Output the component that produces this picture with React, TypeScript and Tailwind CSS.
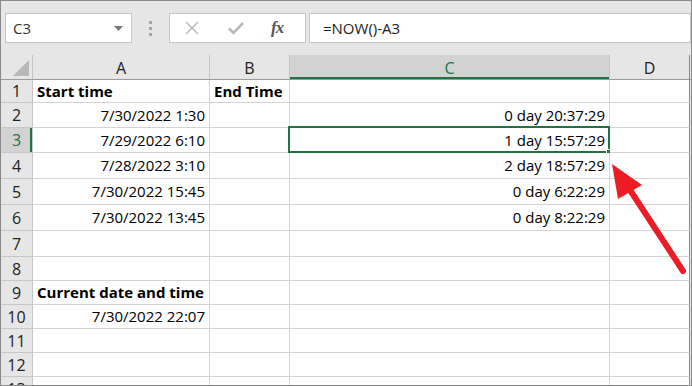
import type { ReactNode } from 'react';

const cols = [
    { key: 'A', w: 'w-[177px]' },
    { key: 'B', w: 'w-[80px]' },
    { key: 'C', w: 'w-[320px]' },
    { key: 'D', w: 'w-[80px]' },
];

type Cell = { text?: string; bold?: boolean; right?: boolean };

const rows: { n: number; h: string; cells: Cell[] }[] = [
    { n: 1, h: 'h-[23px]', cells: [{ text: 'Start time', bold: true }, { text: 'End Time', bold: true }, {}, {}] },
    { n: 2, h: 'h-[25px]', cells: [{ text: '7/30/2022 1:30', right: true }, {}, { text: '0 day 20:37:29', right: true }, {}] },
    { n: 3, h: 'h-[25px]', cells: [{ text: '7/29/2022 6:10', right: true }, {}, { text: '1 day 15:57:29', right: true }, {}] },
    { n: 4, h: 'h-[26px]', cells: [{ text: '7/28/2022 3:10', right: true }, {}, { text: '2 day 18:57:29', right: true }, {}] },
    { n: 5, h: 'h-[26px]', cells: [{ text: '7/30/2022 15:45', right: true }, {}, { text: '0 day 6:22:29', right: true }, {}] },
    { n: 6, h: 'h-[26px]', cells: [{ text: '7/30/2022 13:45', right: true }, {}, { text: '0 day 8:22:29', right: true }, {}] },
    { n: 7, h: 'h-[26px]', cells: [{}, {}, {}, {}] },
    { n: 8, h: 'h-[24px]', cells: [{}, {}, {}, {}] },
    { n: 9, h: 'h-[24px]', cells: [{ text: 'Current date and time', bold: true }, {}, {}, {}] },
    { n: 10, h: 'h-[24px]', cells: [{ text: '7/30/2022 22:07', right: true }, {}, {}, {}] },
    { n: 11, h: 'h-[24px]', cells: [{}, {}, {}, {}] },
    { n: 12, h: 'h-[24px]', cells: [{}, {}, {}, {}] },
    { n: 13, h: 'h-[24px]', cells: [{}, {}, {}, {}] },
];

function Box({ className, children }: { className: string; children?: ReactNode }) {
    return <div className={`bg-white border border-[#c6c6c6] h-[30px] flex items-center ${className}`}>{children}</div>;
}

function App() {
    return (
        <div className="relative w-[692px] h-[386px] overflow-hidden bg-[#e6e6e6] border border-[#8a8a8a] font-['Open_Sans',sans-serif]">
            {/* formula bar */}
            <div className="h-[54px] flex items-start pt-[12px] pl-[4px]">
                <Box className="w-[127px] pl-[7px] pr-[8px] justify-between">
                    <span className="text-[15px] text-[#333]">C3</span>
                    <svg width="9" height="5" viewBox="0 0 9 5"><path d="M0 0h9L4.5 5z" fill="#777" /></svg>
                </Box>
                <div className="w-[37px] h-[30px] flex flex-col items-center justify-center gap-[3px]">
                    <span className="w-[3px] h-[3px] bg-[#a6a6a6]" />
                    <span className="w-[3px] h-[3px] bg-[#a6a6a6]" />
                    <span className="w-[3px] h-[3px] bg-[#a6a6a6]" />
                </div>
                <Box className="w-[137px] pl-[15px]">
                    <svg width="14" height="14" viewBox="0 0 14 14"><path d="M1 1L13 13M13 1L1 13" stroke="#b5b5b5" strokeWidth="1.4" /></svg>
                    <svg width="16" height="14" viewBox="0 0 16 14" className="ml-[29px]"><path d="M1 7.5L5.5 12L15 2" stroke="#b9b9b9" strokeWidth="2.6" fill="none" /></svg>
                    <span className="ml-[27px] font-['Liberation_Serif',serif] italic font-bold text-[17px] text-[#555] tracking-[-1px]">fx</span>
                </Box>
                <Box className="flex-1 ml-[3px] pl-[13px]">
                    <span className="text-[15px] text-[#222]">=NOW()-A3</span>
                </Box>
            </div>

            {/* column headers */}
            <div className="flex h-[25px] border-b border-[#9b9b9b]">
                <div className="w-[32px] border-r border-[#c6c6c6] flex items-end justify-end pr-[3px] pb-[3px]">
                    <svg width="16" height="16" viewBox="0 0 16 16"><path d="M16 0V16H0z" fill="#b8b8b8" /></svg>
                </div>
                {cols.map((c) => (
                    <div
                        key={c.key}
                        className={`${c.w} flex items-center justify-center text-[16px] pt-[2px] border-r ${
                            c.key === 'C'
                                ? 'bg-[#d2d2d2] border-[#c6c6c6] text-[#217346] shadow-[inset_0_-2px_0_#217346]'
                                : c.key === 'D'
                                  ? 'border-[#8a8a8a] text-[#222]'
                                  : 'border-[#c6c6c6] text-[#222]'
                        }`}
                    >
                        {c.key}
                    </div>
                ))}
            </div>

            {/* sheet */}
            {rows.map((r) => (
                <div key={r.n} className={`flex ${r.h} shrink-0`}>
                    <div
                        className={`w-[32px] border-b border-r border-[#c6c6c6] flex items-center justify-center text-[16px] ${
                            r.n === 3 ? 'bg-[#d2d2d2] text-[#217346] shadow-[inset_-2px_0_0_#217346]' : 'text-[#222]'
                        }`}
                    >
                        {r.n}
                    </div>
                    {cols.map((c, i) => {
                        const cell = r.cells[i];
                        const selected = r.n === 3 && c.key === 'C';
                        return (
                            <div
                                key={c.key}
                                className={`${c.w} relative bg-white border-b border-r ${c.key === 'D' ? 'border-r-[#8a8a8a]' : ''} border-[#d4d4d4] flex items-center px-[4px] whitespace-nowrap text-[15px] text-black ${
                                    cell.right ? 'justify-end' : 'justify-start'
                                } ${cell.bold ? 'font-bold' : ''}`}
                            >
                                {cell.text}
                                {selected && (
                                    <>
                                        <div className="absolute -left-[2px] -top-[2px] -right-[1px] -bottom-[1px] border-2 border-[#217346]" />
                                        <div className="absolute -right-[4px] -bottom-[4px] w-[7px] h-[7px] bg-[#217346] border border-white" />
                                    </>
                                )}
                            </div>
                        );
                    })}
                </div>
            ))}

            {/* annotation arrow */}
            <svg className="absolute -left-px -top-px pointer-events-none" width="692" height="386" viewBox="0 0 692 386">
                <line x1="630" y1="190" x2="683" y2="271" stroke="#ed1c24" strokeWidth="6" strokeLinecap="round" />
                <polygon points="612,164 642,185 618,199" fill="#ed1c24" />
            </svg>
        </div>
    );
}

export default App;
